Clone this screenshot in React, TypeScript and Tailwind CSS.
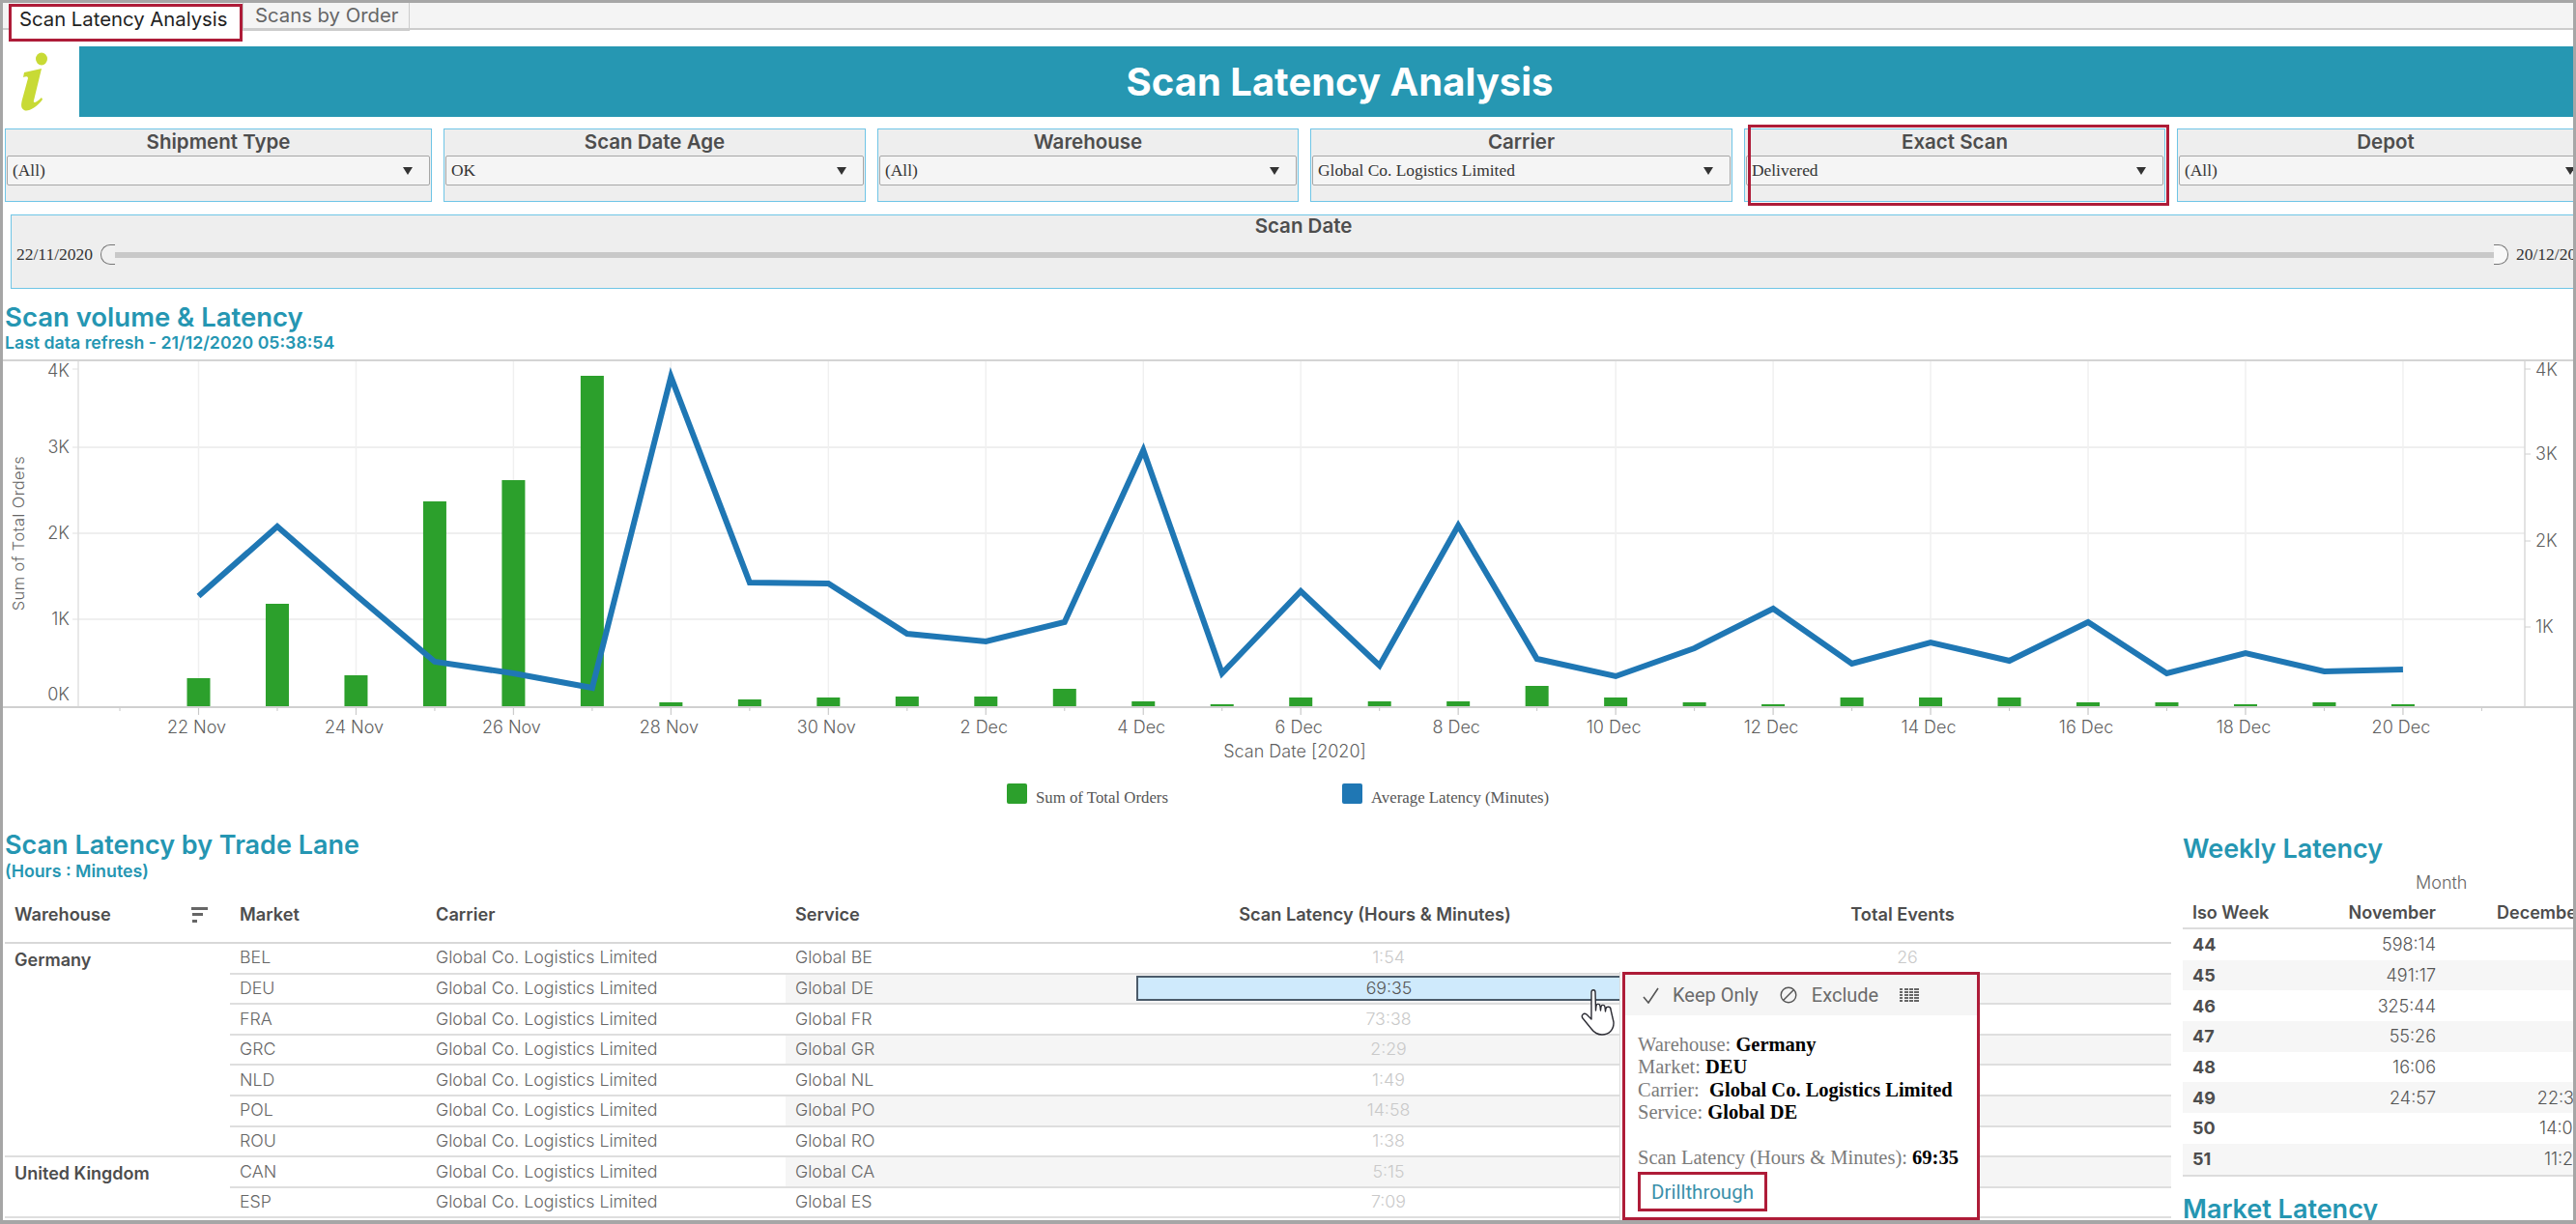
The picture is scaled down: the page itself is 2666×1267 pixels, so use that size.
import React from 'react';

// chart numbers are read straight off the screenshot, in page pixels
const barTops = [703, 626, 700, 520, 498, 390, 728, 725, 723, 722, 722, 714, 727, 730, 723, 727, 727, 711, 723, 728, 730, 723, 723, 723, 728, 728, 730, 728, 730];
const lineYs = [618, 546, 617, 686, 698, 713, 391, 604, 605, 657, 665, 645, 467, 698, 613, 690, 545, 683, 701, 672, 631, 688, 666, 685, 645, 698, 677, 696, 694];
const dayLabels = ['22 Nov', '24 Nov', '26 Nov', '28 Nov', '30 Nov', '2 Dec', '4 Dec', '6 Dec', '8 Dec', '10 Dec', '12 Dec', '14 Dec', '16 Dec', '18 Dec', '20 Dec'];
const dayX = (i: number) => 205.5 + i * 81.48;

const serif = "[font-family:'Liberation_Serif',serif]";

const filters = [
  { title: 'Shipment Type', value: '(All)', width: 'w-[442px]' },
  { title: 'Scan Date Age', value: 'OK', width: 'w-[437px]' },
  { title: 'Warehouse', value: '(All)', width: 'w-[436px]' },
  { title: 'Carrier', value: 'Global Co. Logistics Limited', width: 'w-[437px]' },
  { title: 'Exact Scan', value: 'Delivered', width: 'w-[436px]', marked: true },
  { title: 'Depot', value: '(All)', width: 'w-[432px]' },
];

const FilterCard = ({ title, value, width, marked }: { title: string; value: string; width: string; marked?: boolean }) => (
  <div className={`${width} relative h-[76px] shrink-0 border border-[#6fc5e6] bg-[#eeeeee]`}>
    <div className="flex h-[27px] items-center justify-center text-[20.5px] font-semibold text-[#4d4d4d]">{title}</div>
    <div className="mx-[1px] flex h-[31px] items-center justify-between rounded-[2px] border border-[#a6a6a6] bg-[#f5f5f5] pl-[5px] pr-[17px]">
      <span className={`${serif} text-[17.4px] text-[#333]`}>{value}</span>
      <span className="h-0 w-0 border-x-[5px] border-t-[8px] border-x-transparent border-t-[#333]" />
    </div>
    {marked && <div className="absolute -top-[5px] -right-[5px] -bottom-[5px] left-[3px] border-[3px] border-[#ae1c38]" />}
  </div>
);

const InfoIcon = () => (
  <svg viewBox="0 0 42 62" className="h-[62px] w-[42px]">
    <ellipse cx="30" cy="7" rx="6" ry="6.5" fill="#c8da35" />
    <path d="M12 21 L30 17 L22 50 C21 53 24 53 30 47 L31 49 C24 58 16 62 12 60 C8 58 9 53 10 49 L16 27 C16 25 14 25 11 26 Z" fill="#c8da35" />
  </svg>
);

const Chart = () => (
  <svg viewBox="3 373 2660 427" className="block h-[427px] w-[2660px] [font-family:Inter,sans-serif]">
    <line x1="3" x2="2663" y1="374" y2="374" stroke="#d4d4d4" strokeWidth="2" />
    {[464, 553, 642].map((y) => (
      <line key={y} x1="81" x2="2613" y1={y} y2={y} stroke="#efefef" strokeWidth="2" />
    ))}
    {dayLabels.map((_, i) => (
      <line key={i} x1={dayX(i * 2)} x2={dayX(i * 2)} y1="375" y2="741" stroke="#f0f0f0" strokeWidth="1.5" />
    ))}
    <line x1="81" x2="81" y1="375" y2="732" stroke="#e0e0e0" strokeWidth="1.5" />
    <line x1="2613" x2="2613" y1="375" y2="732" stroke="#d8d8d8" strokeWidth="1.5" />
    {[383, 464, 553, 642].map((y) => (
      <line key={y} x1="75" x2="81" y1={y} y2={y} stroke="#e0e0e0" />
    ))}
    {[383, 471, 561, 650].map((y) => (
      <line key={y} x1="2613" x2="2619" y1={y} y2={y} stroke="#d0d0d0" />
    ))}
    {Array.from({ length: 31 }).map((_, i) => (
      <line key={i} x1={dayX(i - 1)} x2={dayX(i - 1)} y1="732" y2={i % 2 === 0 ? 737 : 741} stroke="#c8c8c8" />
    ))}
    {barTops.map((top, i) => (
      <rect key={i} x={dayX(i) - 12} y={top} width="24" height={732 - top} fill="#2ca02c" />
    ))}
    <line x1="3" x2="2663" y1="733" y2="733" stroke="#d0d0d0" strokeWidth="2" />
    <polyline points={lineYs.map((y, i) => `${dayX(i)},${y}`).join(' ')} fill="none" stroke="#1f77b4" strokeWidth="6" strokeLinejoin="miter" />
    <g fontSize="18" fontWeight="300" fill="#5f5f5f">
      <text x="72" y="391" textAnchor="end">4K</text>
      <text x="72" y="470" textAnchor="end">3K</text>
      <text x="72" y="559" textAnchor="end">2K</text>
      <text x="72" y="648" textAnchor="end">1K</text>
      <text x="72" y="726" textAnchor="end">0K</text>
      <text x="2624" y="390">4K</text>
      <text x="2624" y="477">3K</text>
      <text x="2624" y="567">2K</text>
      <text x="2624" y="656">1K</text>
      {dayLabels.map((label, i) => (
        <text key={label} x={dayX(i * 2) - 2} y="760" textAnchor="middle">{label}</text>
      ))}
      <text x="1340" y="785" textAnchor="middle">Scan Date [2020]</text>
    </g>
    <text x="0" y="0" transform="translate(25 553) rotate(-90)" textAnchor="middle" fontSize="16.5" fontWeight="300" fill="#666" letterSpacing="0.4">
      Sum of Total Orders
    </text>
  </svg>
);

const SortIcon = () => (
  <svg viewBox="0 0 17 16" className="h-[16px] w-[17px]" fill="#666">
    <rect x="0" y="0" width="17" height="3" />
    <rect x="1" y="6" width="11" height="3" />
    <rect x="1" y="13" width="5" height="3" />
  </svg>
);

type LaneRow = { market: string; service: string; latency: string; events?: string; selected?: boolean };

const germany: LaneRow[] = [
  { market: 'BEL', service: 'Global BE', latency: '1:54', events: '26' },
  { market: 'DEU', service: 'Global DE', latency: '69:35', selected: true },
  { market: 'FRA', service: 'Global FR', latency: '73:38' },
  { market: 'GRC', service: 'Global GR', latency: '2:29' },
  { market: 'NLD', service: 'Global NL', latency: '1:49' },
  { market: 'POL', service: 'Global PO', latency: '14:58' },
  { market: 'ROU', service: 'Global RO', latency: '1:38' },
];
const uk: LaneRow[] = [
  { market: 'CAN', service: 'Global CA', latency: '5:15' },
  { market: 'ESP', service: 'Global ES', latency: '7:09' },
];

const LaneRowView = ({ row, shaded }: { row: LaneRow; shaded: boolean }) => (
  <div className="grid h-[31.6px] grid-cols-[203px_372px_360px_528px_546px] items-stretch border-b-2 border-[#dedede] text-[17.8px] font-light text-[#666]">
    <div className="flex items-center pl-[10px]">{row.market}</div>
    <div className="flex items-center pl-[10px]">Global Co. Logistics Limited</div>
    <div className={`${shaded ? 'bg-[#f5f5f5]' : ''} flex items-center pl-[10px]`}>{row.service}</div>
    <div className={`${shaded ? 'bg-[#f5f5f5]' : ''} flex min-h-0 items-center justify-center ${row.selected ? 'py-[2px] pl-[3px] pr-[2px]' : ''}`}>
      {row.selected ? (
        <div className="flex h-[26px] w-full items-center justify-center border-2 border-[#4b5b6a] bg-[#cfeafc] text-[#555]">{row.latency}</div>
      ) : (
        <span className="text-[#c9c9c9]">{row.latency}</span>
      )}
    </div>
    <div className={`${shaded ? 'bg-[#f5f5f5]' : ''} flex items-center justify-center text-[#c9c9c9]`}>{row.events}</div>
  </div>
);

const LaneGroup = ({ name, rows, firstShaded }: { name: string; rows: LaneRow[]; firstShaded: boolean }) => (
  <div className="flex">
    <div className="w-[233px] shrink-0 border-b-2 border-[#dedede] pl-[10px] pt-[3px] text-[18px] font-semibold text-[#4d4d4d]">{name}</div>
    <div className="flex-1">
      {rows.map((row, i) => (
        <LaneRowView key={row.market} row={row} shaded={(i % 2 === 1) !== firstShaded} />
      ))}
    </div>
  </div>
);

const weekly = [
  ['44', '598:14', ''],
  ['45', '491:17', ''],
  ['46', '325:44', ''],
  ['47', '55:26', ''],
  ['48', '16:06', ''],
  ['49', '24:57', '22:37'],
  ['50', '', '14:04'],
  ['51', '', '11:26'],
];

const WeeklyTable = () => (
  <div className="w-[440px]">
    <div className="mt-[3px] flex h-[30px] items-center pl-[241px] text-[18px] font-light text-[#666]">Month</div>
    <div className="grid h-[34px] grid-cols-[130px_132px_153px] items-center border-b-2 border-[#dcdcdc] text-[18px] font-semibold text-[#4d4d4d]">
      <span className="pl-[10px]">Iso Week</span>
      <span className="text-right">November</span>
      <span className="text-right">December</span>
    </div>
    {weekly.map(([week, nov, dec], i) => (
      <div key={week} className={`${i % 2 === 1 ? 'bg-[#f6f6f6]' : ''} grid h-[31.7px] grid-cols-[130px_132px_153px] items-center text-[18px] font-light text-[#555]`}>
        <span className="pl-[10px] font-bold text-[#4d4d4d]">{week}</span>
        <span className="text-right">{nov}</span>
        <span className="text-right">{dec}</span>
      </div>
    ))}
    <div className="h-[2px] bg-[#dcdcdc]" />
  </div>
);

const Tooltip = () => (
  <div className="absolute left-[1673px] top-[1003px] h-[257px] w-[373px] border-l border-[#dddddd] bg-white pl-[2px]">
    <div className="h-full border-[3px] border-[#ae1c38] bg-white">
      <div className="flex h-[42px] items-center bg-[#f5f5f5] pl-[18px] [font-family:Roboto,sans-serif] text-[20px] text-[#6b6b6b]">
        <svg viewBox="0 0 17 17" className="h-[17px] w-[17px]" fill="none" stroke="#555" strokeWidth="1.6">
          <path d="M1 10 L6 16 L16 1" />
        </svg>
        <span className="ml-[14px]">Keep Only</span>
        <svg viewBox="0 0 18 18" className="ml-[22px] h-[18px] w-[18px]" fill="none" stroke="#555" strokeWidth="1.4">
          <circle cx="9" cy="9" r="7.8" />
          <path d="M3.5 14.5 L14.5 3.5" />
        </svg>
        <span className="ml-[15px]">Exclude</span>
        <svg viewBox="0 0 20 15" className="ml-[22px] h-[15px] w-[20px]" fill="#666">
          {[0, 3, 6, 9, 12].map((y) => (
            <g key={y}>
              <rect x="0" y={y} width="3" height="2" />
              <rect x="5" y={y} width="4" height="2" />
              <rect x="10" y={y} width="4" height="2" />
              <rect x="15" y={y} width="5" height="2" />
            </g>
          ))}
        </svg>
      </div>
      <div className={`${serif} px-[13px] pt-[19px] text-[20.5px] leading-[23.4px] text-[#7b7b7b]`}>
        <div>Warehouse: <b className="text-black">Germany</b></div>
        <div>Market: <b className="text-black">DEU</b></div>
        <div>Carrier: &nbsp;<b className="text-black">Global Co. Logistics Limited</b></div>
        <div>Service: <b className="text-black">Global DE</b></div>
        <div className="mt-[23.4px]">Scan Latency (Hours &amp; Minutes): <b className="text-black">69:35</b></div>
      </div>
      <div className="ml-[13px] mt-[3px] flex h-[41px] w-[134px] items-center justify-center border-[3px] border-[#ae1c38] [font-family:Roboto,sans-serif] text-[20.5px] text-[#3b90aa]">
        Drillthrough
      </div>
    </div>
  </div>
);

const HandCursor = () => (
  <svg viewBox="0 0 36 48" className="absolute left-[1633px] top-[1021px] h-[48px] w-[36px]" fill="white" stroke="#2b2b33" strokeWidth="1.4" strokeLinejoin="round">
    <path d="M11 3 C11 0 15 0 15 3 L15.5 22 L16 17 C16.5 14.5 20 15 20 17.5 L20.5 22 L21 18 C21.5 15.5 25 16 25 18.5 L25.5 23 L26 20 C26.5 17.5 31 17.5 31 21 L34 34 C34.5 42 29 47 22 47 C17 47 14 45 11 41 L2 30 C0 27 3 24 6 26 L11 31 Z" />
  </svg>
);

export default function App() {
  return (
    <div className="relative h-[1267px] w-[2666px] overflow-hidden border-x-[3px] border-t-[3px] border-b-[4px] border-[#a6a6a6] bg-white [font-family:Inter,sans-serif]">
      {/* workbook tabs */}
      <div className="flex h-[28px] border-b-2 border-[#cccccc] bg-[#f4f4f4]">
        <div className="z-10 ml-[6px] mt-[1px] flex h-[39px] w-[242px] shrink-0 items-start border-[3px] border-[#ae1c38] bg-white pl-[8px] text-[20.3px] leading-[26px] text-[#222]">
          Scan Latency Analysis
        </div>
        <div className="flex h-[29px] w-[173px] items-start border-x border-b-2 border-[#cccccc] pl-[12px] text-[20.3px] leading-[26px] text-[#666]">Scans by Order</div>
      </div>

      {/* banner */}
      <div className="mt-[17px] flex h-[73px]">
        <div className="flex w-[79px] shrink-0 items-center pl-[10px]">
          <InfoIcon />
        </div>
        <div className="flex flex-1 items-center justify-center bg-[#2697b2] pl-[28px] text-[40px] font-bold text-white">Scan Latency Analysis</div>
      </div>

      {/* filters */}
      <div className="mt-[12px] flex gap-[12px] pl-[2px]">
        {filters.map((f) => (
          <FilterCard key={f.title} {...f} />
        ))}
      </div>

      {/* date slider */}
      <div className="ml-[8px] mt-[13px] h-[77px] w-[2676px] border border-[#6fc5e6] bg-[#eeeeee]">
        <div className="flex h-[23px] items-center justify-center text-[20.5px] font-semibold text-[#4d4d4d]">Scan Date</div>
        <div className="flex h-[35px] items-center pl-[5px]">
          <span className={`${serif} w-[87px] text-[17.5px] text-[#333]`}>22/11/2020</span>
          <span className="h-[21px] w-[15px] rounded-l-[10px] border border-r-0 border-[#777] bg-[#f0f0f0]" />
          <span className="h-[6px] flex-1 bg-[#c8c8c8]" />
          <span className="h-[21px] w-[15px] rounded-r-[10px] border border-l-0 border-[#777] bg-[#f8f8f8]" />
          <span className={`${serif} ml-[8px] w-[82px] text-[17.5px] text-[#333]`}>20/12/2020</span>
        </div>
      </div>

      {/* volume chart */}
      <div className="mt-[13px] pl-[2px] text-[#2596b2]">
        <div className="text-[27.5px] font-semibold leading-[32px]">Scan volume &amp; Latency</div>
        <div className="text-[17.7px] font-semibold leading-[22px]">Last data refresh - 21/12/2020 05:38:54</div>
      </div>
      <div className="mt-[6px]">
        <Chart />
      </div>
      <div className={`${serif} mt-[12px] flex h-[21px] text-[16.8px] text-[#555]`}>
        <div className="ml-[1039px] flex w-[347px] items-start gap-[9px]">
          <span className="h-[21px] w-[21px] rounded-[2px] bg-[#2ca02c]" />
          <span className="mt-[5px] leading-[20px]">Sum of Total Orders</span>
        </div>
        <div className="flex items-start gap-[9px]">
          <span className="h-[21px] w-[21px] rounded-[2px] bg-[#1f77b4]" />
          <span className="mt-[5px] leading-[20px]">Average Latency (Minutes)</span>
        </div>
      </div>

      {/* trade lane table and side panel */}
      <div className="mt-[27px] flex">
        <div className="ml-[2px] w-[2242px] shrink-0">
          <div className="text-[27px] font-semibold leading-[32px] text-[#2596b2]">Scan Latency by Trade Lane</div>
          <div className="text-[17.8px] font-semibold leading-[22px] text-[#2596b2]">(Hours : Minutes)</div>
          <div className="mt-[20px] grid h-[44px] grid-cols-[233px_203px_372px_360px_528px_546px] items-center border-b-2 border-[#d8d8d8] pb-[14px] text-[18.2px] font-semibold text-[#4d4d4d]">
            <div className="flex items-center justify-between pl-[10px] pr-[23px]">
              Warehouse
              <SortIcon />
            </div>
            <div className="pl-[10px]">Market</div>
            <div className="pl-[10px]">Carrier</div>
            <div className="pl-[10px]">Service</div>
            <div className="pr-[28px] text-center">Scan Latency (Hours &amp; Minutes)</div>
            <div className="pr-[10px] text-center">Total Events</div>
          </div>
          <LaneGroup name="Germany" rows={germany} firstShaded={false} />
          <LaneGroup name="United Kingdom" rows={uk} firstShaded={true} />
        </div>
        <div className="ml-[12px] flex-1 pt-[4px]">
          <div className="text-[27px] font-semibold leading-[32px] text-[#2596b2]">Weekly Latency</div>
          <WeeklyTable />
          <div className="mt-[18px] text-[27px] font-semibold leading-[32px] text-[#2596b2]">Market Latency</div>
        </div>
      </div>

      <Tooltip />
      <HandCursor />
    </div>
  );
}
